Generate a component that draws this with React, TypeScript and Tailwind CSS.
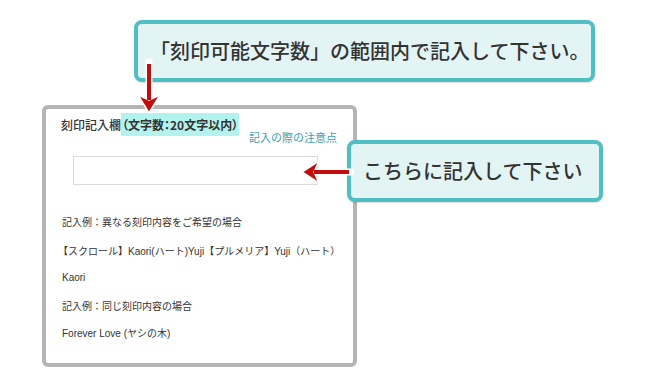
const jp = "font-['Liberation_Sans','Noto_Sans_CJK_JP',sans-serif]";

const Callout = ({ children, className }: { children: string; className: string }) => (
  <div
    className={`flex items-center h-[62px] pl-3 border-4 border-[#4fbfc4] rounded-lg bg-[#e3f4f5] shadow-[0_1px_2px_rgba(0,0,0,0.15)] text-[20px] font-medium text-[#333] whitespace-nowrap font-['Noto_Sans_CJK_JP',sans-serif] ${className}`}
  >
    {children}
  </div>
);

const Arrows = () => (
  <svg
    className="absolute left-0 top-0 pointer-events-none"
    width={670}
    height={388}
    viewBox="0 0 670 388"
  >
    <g stroke="#fff" strokeWidth={7} strokeLinecap="round" strokeLinejoin="round" fill="#fff">
      <line x1={149} y1={62} x2={149} y2={100} />
      <line x1={351} y1={172} x2={315} y2={172} />
    </g>
    <g fill="#c10d0d" stroke="#fff" strokeWidth={1.5} strokeLinejoin="round">
      <path d="M149 113 L138 95 L149 100 L160 95 Z" />
      <path d="M302 172 L319 161 L314 172 L319 183 Z" />
    </g>
    <g stroke="#c10d0d" strokeWidth={4}>
      <line x1={149} y1={64} x2={149} y2={100} />
      <line x1={349} y1={172} x2={314} y2={172} />
    </g>
  </svg>
);

export default function App() {
  return (
    <div className={`relative w-[670px] h-[388px] bg-white overflow-hidden ${jp}`}>
      <div className="flex flex-col">
        <Callout className="ml-[134px] mt-[20px] w-[461px]">
          「刻印可能文字数」の範囲内で記入して下さい。
        </Callout>

        <div className="ml-[42px] mt-[23px] w-[315px] h-[262px] border-4 border-[#b5b5b5] rounded-md bg-white flex flex-col text-[#333]">
          <div className="pl-[15px] pt-[5px] leading-[21px] text-[12px] [font-feature-settings:'palt'] font-['Noto_Sans_CJK_JP',sans-serif]">
            <span className="font-medium">刻印記入欄</span>
            <span className="font-bold bg-[#b3f3ee] px-[1px] py-[3px]">（文字数：20文字以内）</span>
          </div>
          <div className="-mt-1 pr-4 text-right text-[11px] leading-[14px] text-[#3aa3ae]">
            記入の際の注意点
          </div>
          <div className="ml-[27px] mt-[11px] w-[245px] h-[29px] border border-[#dcdcdc] bg-white" />

          <div className="pl-4 text-[10px] leading-[14px]">
            <p className="mt-[31px]">記入例：異なる刻印内容をご希望の場合</p>
            <p className="mt-[15px] -ml-1">【スクロール】Kaori(ハート)Yuji【プルメリア】Yuji（ハート）</p>
            <p className="mt-[12px]">Kaori</p>
            <p className="mt-[15px]">記入例：同じ刻印内容の場合</p>
            <p className="mt-[13px]">Forever Love (ヤシの木)</p>
          </div>
        </div>
      </div>

      <Callout className="absolute left-[347px] top-[140px] w-[256px]">こちらに記入して下さい</Callout>

      <Arrows />
    </div>
  );
}
